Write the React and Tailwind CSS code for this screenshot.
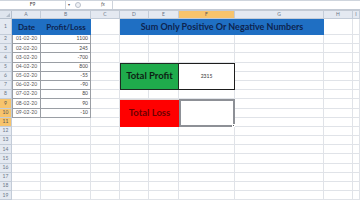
import React from "react";

const COLS = ["A", "B", "C", "D", "E", "F", "G", "H", "I", ""];
const ROWS = Array.from({ length: 19 }, (_, i) => i + 1);
const DATA = [
  ["01-02-20", "1100"],
  ["02-02-20", "245"],
  ["03-02-20", "-700"],
  ["04-02-20", "800"],
  ["05-02-20", "-55"],
  ["06-02-20", "-90"],
  ["07-02-20", "80"],
  ["08-02-20", "90"],
  ["09-02-20", "-10"],
];
const SELECTED_ROWS = [9, 10, 11];

const font = { fontFamily: "Lato, 'Liberation Sans', sans-serif" };

function FormulaBar() {
  return (
    <div className="h-[11px] flex items-stretch bg-white border-t border-[#cfd5dd] border-b-2 border-b-[#c3cad4]">
      <div className="w-[66px] flex items-center justify-center border-r border-[#cdd3db] text-[5px] text-[#333]">
        F9
      </div>
      <div className="w-[6px] flex items-center justify-center text-[4px] text-[#555]">▾</div>
      <div className="w-[40px] flex items-center gap-[20px] pl-[3px]">
        <div className="w-[6px] h-[6px] rounded-full border border-[#b9c0ca] bg-[#eef1f5]" />
        <span className="text-[5px] italic text-[#666]">fx</span>
      </div>
      <div className="flex-1 border-l border-[#cdd3db]" />
    </div>
  );
}

export default function App() {
  return (
    <div className="w-[360px] h-[202px] overflow-hidden bg-white" style={font}>
      <FormulaBar />
      <div className="grid grid-cols-[12px_29px_50px_29px_29px_30px_56px_89px_29px_7px] grid-rows-[8px_16px_repeat(19,9.2px)]">
        {/* column headers */}
        <div className="col-start-1 row-start-1 bg-[#dfe5ee] border-r border-b border-[#b6c0cd] flex items-end justify-end p-[1px]">
          <div className="w-0 h-0 border-l-[4px] border-l-transparent border-b-[4px] border-b-[#b4bdc9]" />
        </div>
        {COLS.map((c, i) => (
          <div
            key={"h" + i}
            style={{ gridRow: 1, gridColumn: i + 2 }}
            className={
              "flex items-center justify-center text-[5px] border-r border-b border-[#c3ccd8] " +
              (c === "F" ? "bg-[#f7c46c] text-[#555]" : "bg-[#e4e9f1] text-[#6b7686]")
            }
          >
            {c}
          </div>
        ))}

        {/* body */}
        {ROWS.map((r) => (
          <React.Fragment key={r}>
            <div
              style={{ gridRow: r + 1, gridColumn: 1 }}
              className={
                "flex items-center justify-center text-[5px] border-r border-b border-[#c3ccd8] " +
                (SELECTED_ROWS.includes(r) ? "bg-[#f7c46c] text-[#555]" : "bg-[#e4e9f1] text-[#6b7686]")
              }
            >
              {r}
            </div>
            {COLS.map((c, i) => (
              <div
                key={r + "-" + i}
                style={{ gridRow: r + 1, gridColumn: i + 2 }}
                className="border-r border-b border-[#e0e3e8]"
              />
            ))}
          </React.Fragment>
        ))}

        {/* A1:B1 header */}
        <div className="col-start-2 row-start-2 bg-[#1f6fc3] flex items-center justify-center text-[8px] font-bold text-[#0d2450]">
          Date
        </div>
        <div className="col-start-3 row-start-2 bg-[#1f6fc3] flex items-center justify-center text-[8px] font-bold text-[#0d2450]">
          Profit/Loss
        </div>

        {/* D1:G1 title */}
        <div className="col-start-5 col-end-9 row-start-2 bg-[#1f6fc3] flex items-center justify-center text-[9px] font-bold text-[#0d2450]">
          Sum Only Positive Or Negative Numbers
        </div>

        {/* data */}
        {DATA.map(([d, v], i) => (
          <React.Fragment key={d}>
            <div
              className="border-l border-r border-b border-[#9a9ea4] flex items-center justify-center text-[5px] text-[#555]"
              style={{ gridRow: i + 3, gridColumn: 2 }}
            >
              {d}
            </div>
            <div
              className="border-r border-b border-[#9a9ea4] flex items-center justify-end pr-[2px] text-[5px] text-[#444]"
              style={{ gridRow: i + 3, gridColumn: 3 }}
            >
              {v}
            </div>
          </React.Fragment>
        ))}

        {/* Total Profit */}
        <div className="col-start-5 col-end-7 row-start-6 row-end-9 bg-[#1fab4c] border border-[#1d2b22] flex items-center justify-center text-[9.5px] font-bold text-[#0d1f14]">
          Total Profit
        </div>
        <div className="col-start-7 row-start-6 row-end-9 bg-white border border-l-0 border-[#1d1d1d] flex items-center justify-center text-[5px] text-[#333]">
          2315
        </div>

        {/* Total Loss */}
        <div className="col-start-5 col-end-7 row-start-10 row-end-13 bg-[#ff0000] border-t border-[#d9d9d9] flex items-center justify-center text-[9.5px] font-bold text-[#6e0000]">
          Total Loss
        </div>
        <div className="col-start-7 row-start-10 row-end-13 relative bg-white border-2 border-[#8d9096]">
          <div className="absolute -right-[2px] -bottom-[2px] w-[3px] h-[3px] bg-[#5c5f63] border border-white" />
        </div>
      </div>
    </div>
  );
}
